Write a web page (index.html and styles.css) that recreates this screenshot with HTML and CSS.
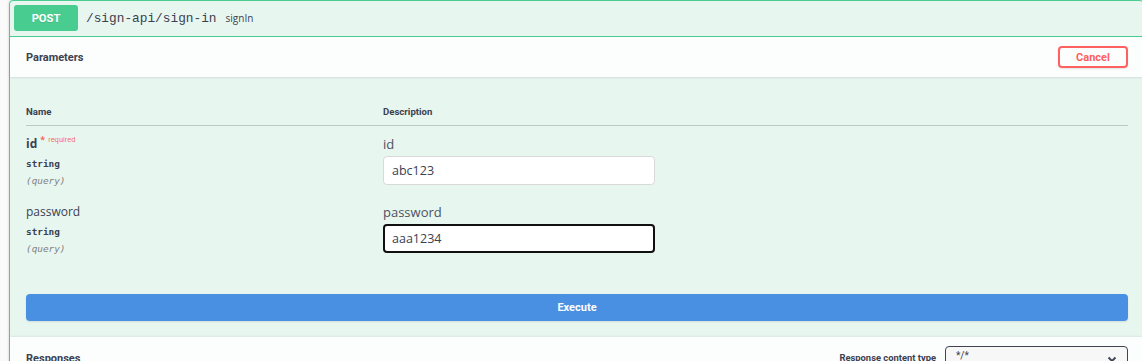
FILE: index.html
```html
<!DOCTYPE html>
<html>
<head>
<meta charset="utf-8">
<link rel="stylesheet" href="styles.css">
</head>
<body>
<div class="opblock">
  <div class="summary">
    <span class="method">POST</span>
    <span class="path">/sign-api/sign-in</span>
    <span class="op-desc">signIn</span>
  </div>
  <div class="section-header">
    <h4 class="section-title">Parameters</h4>
    <button class="btn-cancel">Cancel</button>
  </div>
  <div class="params">
    <div class="params-head">
      <div class="col-name">Name</div>
      <div class="col-desc">Description</div>
    </div>
    <div class="param-row">
      <div class="col-name">
        <div class="param-name required">id<span class="req-star">*</span><span class="req-label">required</span></div>
        <div class="param-type">string</div>
        <div class="param-in">(query)</div>
      </div>
      <div class="col-desc">
        <div class="field-label">id</div>
        <input class="field-input" type="text" value="abc123">
      </div>
    </div>
    <div class="param-row">
      <div class="col-name">
        <div class="param-name">password</div>
        <div class="param-type">string</div>
        <div class="param-in">(query)</div>
      </div>
      <div class="col-desc">
        <div class="field-label">password</div>
        <input class="field-input focused" type="text" value="aaa1234">
      </div>
    </div>
    <button class="btn-execute">Execute</button>
  </div>
  <div class="responses-header">
    <h4 class="section-title">Responses</h4>
    <div class="content-type">
      <span class="ct-label">Response content type</span>
      <div class="ct-select"><span>*/*</span>
        <svg class="chev" width="10" height="7" viewBox="0 0 10 7"><path d="M1.5 1.5 L5 5 L8.5 1.5" fill="none" stroke="#3b4151" stroke-width="1.8"/></svg>
      </div>
    </div>
  </div>
</div>
</body>
</html>
```

FILE: styles.css
```css
html, body {
  margin: 0;
  padding: 0;
  background: #fafafa;
  overflow: hidden;
}
body {
  font-family: "Open Sans", sans-serif;
  color: #3b4151;
}
.opblock {
  margin-left: 9px;
  width: 1135px;
  box-sizing: border-box;
  border: 1px solid #49cc90;
  border-radius: 4px;
  background: #e8f6f0;
  box-shadow: 0 0 3px rgba(0,0,0,.19);
}
.summary {
  display: flex;
  align-items: center;
  padding: 4px 4px 5px;
  height: 26px;
  border-bottom: 1px solid #49cc90;
}
.method {
  display: flex;
  align-items: center;
  justify-content: center;
  width: 64px;
  height: 26px;
  background: #49cc90;
  border-radius: 3px;
  color: #fff;
  font-family: Roboto, sans-serif;
  font-weight: 700;
  font-size: 11.2px;
  text-shadow: 0 1px 0 rgba(0,0,0,.1);
}
.path {
  font-family: "Liberation Mono", monospace;
  font-size: 12.8px;
  color: #3b4151;
  padding: 0 9px 0 8px;
}
.op-desc {
  font-family: "Open Sans", sans-serif;
  font-size: 10px;
  color: #3b4151;
}
.section-header {
  display: flex;
  align-items: center;
  justify-content: space-between;
  height: 40px;
  padding: 0 15px 0 16px;
  background: rgba(255,255,255,.85);
  box-shadow: 0 1px 2px rgba(0,0,0,.1);
}
.section-title {
  margin: 0;
  font-family: Roboto, sans-serif;
  font-weight: 700;
  font-size: 11px;
  color: #3b4151;
}
.btn-cancel {
  width: 70px;
  height: 22px;
  box-sizing: border-box;
  background: transparent;
  border: 2px solid #ff6060;
  border-radius: 4px;
  color: #ff6060;
  font-family: Roboto, sans-serif;
  font-weight: 700;
  font-size: 11px;
  box-shadow: 0 1px 2px rgba(0,0,0,.1);
  padding: 0;
}
.params {
  padding: 20px 15px 16px 16px;
}
.params-head {
  display: flex;
  align-items: center;
  height: 28px;
  border-bottom: 1px solid rgba(59,65,81,.25);
  font-family: Roboto, sans-serif;
  font-weight: 700;
  font-size: 9.6px;
}
.col-name {
  width: 357px;
  flex: none;
}
.col-desc {
  flex: 1;
}
.param-row {
  display: flex;
  padding: 10px 0 0;
}
.param-row .col-desc {
  padding-bottom: 9px;
}
.param-name {
  font-family: "Open Sans", sans-serif;
  font-size: 12px;
  line-height: 16px;
  height: 16px;
  color: #3b4151;
}
.param-name.required {
  font-weight: 700;
}
.req-star {
  color: rgba(255,0,0,.6);
  font-size: 9px;
  position: relative;
  top: -5px;
  padding-left: 3px;
}
.req-label {
  color: rgba(255,0,0,.6);
  font-family: Roboto, sans-serif;
  font-weight: 400;
  font-size: 7.5px;
  position: relative;
  top: -6px;
  padding-left: 3px;
}
.param-type {
  margin-top: 3px;
  font-family: "DejaVu Sans Mono", monospace;
  font-size: 9.4px;
  font-weight: 700;
  line-height: 17px;
  color: #3b4151;
}
.param-in {
  font-family: "DejaVu Sans Mono", monospace;
  font-size: 9.4px;
  font-style: italic;
  line-height: 17px;
  color: #808080;
}
.field-label {
  font-size: 13px;
  line-height: 16px;
  color: #3b4151;
  opacity: .9;
}
.field-input {
  display: block;
  margin-top: 4px;
  width: 272px;
  height: 29px;
  box-sizing: border-box;
  border: 1px solid #d9d9d9;
  border-radius: 4px;
  background: #fff;
  padding: 0 8px;
  font-family: "Open Sans", sans-serif;
  font-size: 12.5px;
  color: #3b4151;
  outline: none;
}
.field-input.focused {
  border: 2px solid #101010;
  padding: 0 7px;
}
.btn-execute {
  display: block;
  width: 100%;
  height: 27px;
  margin-top: 32px;
  border: none;
  border-radius: 4px;
  background: #4990e2;
  color: #fff;
  font-family: Roboto, sans-serif;
  font-weight: 700;
  font-size: 11px;
  box-shadow: 0 1px 2px rgba(0,0,0,.1);
}
.responses-header {
  display: flex;
  align-items: flex-start;
  justify-content: space-between;
  height: 40px;
  padding: 9px 15px 0 16px;
  box-sizing: border-box;
  background: rgba(255,255,255,.85);
  box-shadow: 0 -1px 2px rgba(0,0,0,.06);
}
.responses-header .section-title {
  margin-top: 6px;
}
.content-type {
  display: flex;
  align-items: flex-start;
}
.ct-label {
  font-family: Roboto, sans-serif;
  font-weight: 700;
  font-size: 9.4px;
  margin-top: 6px;
  margin-right: 9px;
}
.ct-select {
  width: 183px;
  height: 26px;
  box-sizing: border-box;
  border: 1px solid #41444e;
  border-radius: 4px;
  background: #f7f7f7;
  display: flex;
  justify-content: space-between;
  padding: 3px 10px 0 10px;
  font-family: Roboto, sans-serif;
  font-weight: 400;
  font-size: 10px;
}
.chev {
  margin-top: 6px;
}
```
